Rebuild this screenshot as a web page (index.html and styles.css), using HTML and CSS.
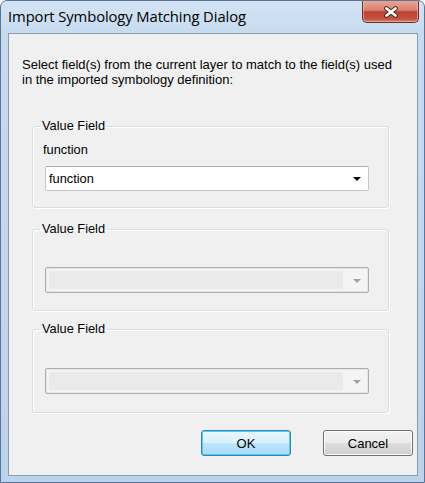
FILE: index.html
```html
<!DOCTYPE html>
<html>
<head>
<meta charset="utf-8">
<title>Import Symbology Matching Dialog</title>
<link rel="stylesheet" href="styles.css">
</head>
<body>
<div class="window">
  <div class="titlebar">
    <div class="title">Import Symbology Matching Dialog</div>
    <div class="close">
      <svg width="16" height="12" viewBox="0 0 16 12">
        <path d="M3.5 2.5 L12.5 9.5 M12.5 2.5 L3.5 9.5" stroke="#4a2420" stroke-width="4.6" stroke-linecap="round"/>
        <path d="M3.5 2.5 L12.5 9.5 M12.5 2.5 L3.5 9.5" stroke="#ffffff" stroke-width="2.8" stroke-linecap="round"/>
      </svg>
    </div>
  </div>
  <div class="client">
    <p class="intro">Select field(s) from the current layer to match to the field(s) used<br>in the imported symbology definition:</p>

    <fieldset class="group group-first">
      <legend class="legend">Value Field</legend>
      <div class="field-label">function</div>
      <div class="combo">
        <span class="combo-text">function</span>
        <span class="arrow"></span>
      </div>
    </fieldset>

    <fieldset class="group group-second">
      <legend class="legend">Value Field</legend>
      <div class="combo combo-disabled">
        <span class="combo-fill"></span>
        <span class="arrow arrow-disabled"></span>
      </div>
    </fieldset>

    <fieldset class="group group-third">
      <legend class="legend">Value Field</legend>
      <div class="combo combo-disabled">
        <span class="combo-fill"></span>
        <span class="arrow arrow-disabled"></span>
      </div>
    </fieldset>

    <div class="buttons">
      <button class="btn btn-default">OK</button>
      <button class="btn">Cancel</button>
    </div>
  </div>
</div>
</body>
</html>
```

FILE: styles.css
```css
html, body {
  margin: 0;
  padding: 0;
  background: #ffffff;
}

.window {
  width: 425px;
  height: 483px;
  box-sizing: border-box;
  border: 1px solid #5d7594;
  border-radius: 7px 7px 0 0;
  background: linear-gradient(180deg, #d3e3f4 0px, #c6dbf0 33px, #bcd3ec 100%);
  display: flex;
  flex-direction: column;
  overflow: hidden;
}

.titlebar {
  height: 32px;
  display: flex;
  align-items: flex-start;
  flex-shrink: 0;
}

.title {
  font-family: "Open Sans", "Noto Sans", sans-serif;
  font-size: 14.8px;
  line-height: 20px;
  color: #000000;
  margin-top: 5px;
  margin-left: 7px;
  letter-spacing: -0.1px;
}

.close {
  margin-left: auto;
  margin-right: 5px;
  margin-top: -1px;
  width: 57px;
  height: 23px;
  box-sizing: border-box;
  border: 1px solid #6c2c24;
  border-top: none;
  border-radius: 0 0 5px 5px;
  background: linear-gradient(180deg, #e9a99b 0%, #d8826f 45%, #c0412d 55%, #c2523f 85%, #d9806a 100%);
  display: flex;
  align-items: center;
  justify-content: center;
  box-shadow: inset 0 0 0 1px rgba(255, 210, 200, 0.5);
}

.close svg {
  display: block;
  margin-top: 1px;
}

.client {
  margin: 0 6px 6px 7px;
  flex: 1;
  box-sizing: border-box;
  border: 1px solid #8a9bb0;
  background: #f0f0f0;
  padding: 23px 4px 0 0;
  display: flex;
  flex-direction: column;
  font-family: "Liberation Sans", Arial, sans-serif;
  font-size: 12.8px;
  color: #000000;
}

.intro {
  margin: 0 0 0 13px;
  font-size: 13px;
  line-height: 15px;
}

.group {
  margin: 0 24px 0 23px;
  border: 1px solid #d5dfe5;
  border-radius: 3px;
  box-shadow: inset 1px 1px 0 #ffffff, 1px 1px 0 #ffffff;
  padding: 0 19px 16px 7px;
  min-inline-size: 0;
  display: flex;
  flex-direction: column;
}

.group-first {
  margin-top: 32px;
  padding-top: 10px;
}

.group-second {
  margin-top: 14px;
  padding-top: 31px;
  padding-bottom: 17px;
}

.group-third {
  margin-top: 11px;
  padding-top: 32px;
  padding-bottom: 18px;
}

.legend {
  padding: 0 2px;
  line-height: 14px;
}

.field-label {
  line-height: 14px;
  padding-left: 3px;
  margin-bottom: 9px;
}

.combo {
  margin-left: 5px;
  height: 25px;
  box-sizing: border-box;
  border: 1px solid #c4c8cc;
  border-top-color: #abadb3;
  border-radius: 2px;
  background: #ffffff;
  display: flex;
  align-items: center;
  padding: 0 6px 0 3px;
}

.combo-text {
  flex: 1;
  line-height: 14px;
}

.arrow {
  width: 0;
  height: 0;
  border-left: 4px solid transparent;
  border-right: 4px solid transparent;
  border-top: 4px solid #000000;
  margin-right: 1px;
  margin-top: 1px;
}

.combo-disabled {
  height: 26px;
  border: 1px solid #adadad;
  background: #f4f4f4;
  box-shadow: inset 0 0 0 1px #e6e6e6;
  padding: 3px 6px 3px 3px;
  align-items: stretch;
}

.combo-fill {
  flex: 1;
  background: #eaeaea;
  margin-right: 10px;
}

.arrow-disabled {
  border-top-color: #a3a3a3;
  align-self: center;
}

.buttons {
  margin-top: 17px;
  display: flex;
  justify-content: flex-end;
  gap: 32px;
}

.btn {
  width: 90px;
  height: 26px;
  box-sizing: border-box;
  border: 1px solid #707070;
  border-radius: 3px;
  background: linear-gradient(180deg, #f2f2f2 0%, #ebebeb 49%, #dddddd 51%, #cfcfcf 100%);
  box-shadow: inset 0 0 0 1px #fcfcfc;
  font-family: "Liberation Sans", Arial, sans-serif;
  font-size: 13px;
  color: #000000;
  padding: 0;
  margin: 0;
}

.btn-default {
  border-color: #3c7fb1;
  background: linear-gradient(180deg, #eaf6fd 0%, #d9f0fc 49%, #bee6fd 51%, #a7d9f5 100%);
  box-shadow: inset 0 0 0 1px #48d0f8;
}
```
